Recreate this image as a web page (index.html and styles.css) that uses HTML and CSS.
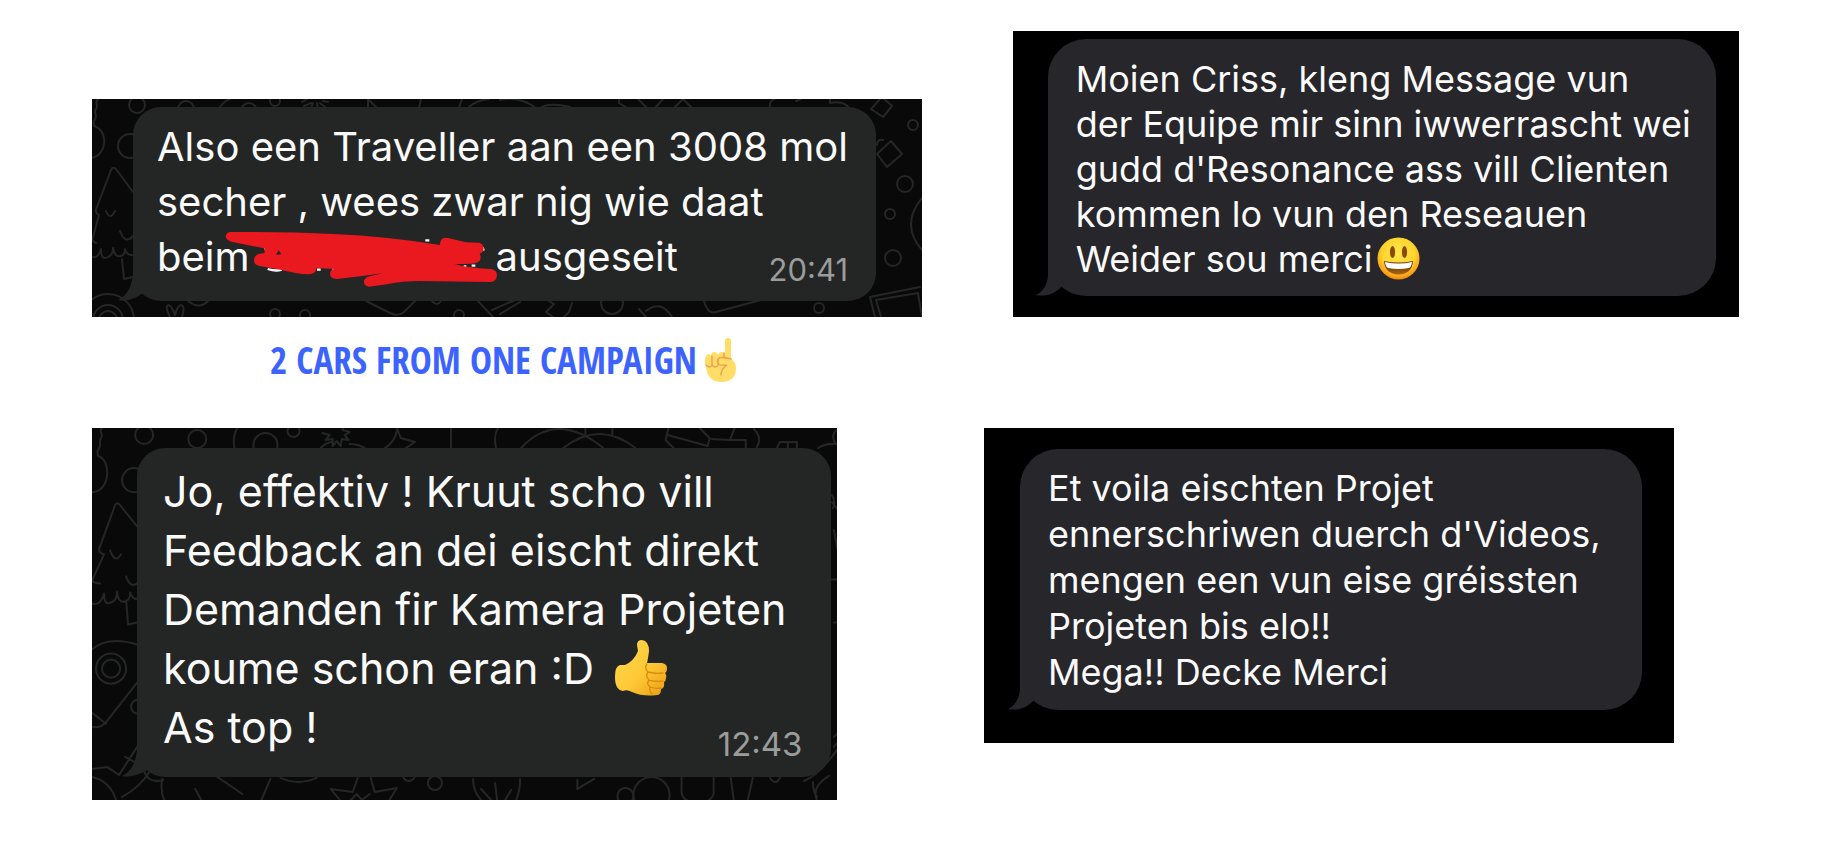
FILE: index.html
```
<!DOCTYPE html>
<html lang="lb">
<head>
<meta charset="utf-8">
<meta name="viewport" content="width=device-width, initial-scale=1">
<title>Client feedback</title>
<link rel="stylesheet" href="styles.css">
</head>
<body>
<main class="board">
  <article class="shot shot-traveller">
    <svg class="doodles" viewBox="0 0 830 218" preserveAspectRatio="xMinYMin slice" aria-hidden="true">
      <circle cx="45" cy="6" r="8"/><circle cx="38" cy="47" r="12"/><circle cx="94" cy="10" r="8"/><circle cx="157" cy="12" r="8"/><circle cx="183" cy="2" r="5"/>
      <path d="M6 0c-4 4 1 6-2 10s2 6-1 10 0 4-1 7c14 4 14 28-2 32"/>
      <path d="M128 8q4-6 10-8M210 3l5-3m-3 7l7-3m0 5l2-5m5 6l-1-6m8 4l-5-4m8-1l-5-1M276 9V0l9 9M327 9l2-9M367 9l3-9M377 8q8-7 20-8"/>
      <path d="M41 93L24 70q-3-3-5 1L5 108q-3 5 2 8L1 138q-2 4 3 6M0 158q6 2 9-8 0 12 7 8 5-2 5-9 2 10 8 8 4-1 4-7 2 7 8 6M14 112q4 10 9 0M28 132q5 14 13 5M30 160l2 20 9-2"/>
      <circle cx="16" cy="221" r="26"/><circle cx="16" cy="221" r="15"/><circle cx="16" cy="221" r="9"/>
      <path d="M78 218c-8-15 1-16 5-2 3-14 12-13 7 2M96 202q11 9 20 0M274 202l24 12q8 4 14-1l12-12M340 202q5 6 9 0M386 202l15 16M400 211l23-10"/>
      <circle cx="183" cy="215" r="5"/><circle cx="213" cy="216" r="5"/><circle cx="367" cy="216" r="5"/>
      <path d="M408 1q20-4 36 8M448 9q9-6 30-1M527 0l0 4 10 6M546 0l9 9M571 0l-8 9M582 9l9-9 9 9M678 9q-1-8 5-9M704 2l5-2M738 0v4q14-3 20 6"/>
      <path d="M408 215l20-12M455 201l7 4-8 8 7 5M472 218l5-5 3-9M612 202q4 14 12 11l45-12M547 210l7 8m0-6q15-12 26 6"/><circle cx="520" cy="204" r="11"/>
      <path d="M790-2l10 9-9 11-12-8zM785 46q0-6 6-5M785 55l14-13 11 13-15 13zM778 198l50-10M778 198l5 20M784 201l42-7 4 24M784 201l5 17"/>
      <circle cx="821" cy="26" r="5"/><circle cx="813" cy="85" r="8"/><circle cx="798" cy="115" r="5"/><circle cx="801" cy="159" r="8"/><circle cx="727" cy="209" r="5"/>
      <path d="M830 99q-22 27 0 52"/>
    </svg>
    <div class="bubble">
      <svg class="tail" viewBox="0 0 30 30" aria-hidden="true"><path d="M15 0C15 14 9 25 0 29C9 31 18 27 25 22L30 0Z"/></svg>
      <p class="message">Also een Traveller aan een 3008 mol<br>secher , wees zwar nig wie daat<br>beim<span class="redaction"><svg class="scribble" viewBox="0 0 870 210" aria-hidden="true">
        <path class="ink" d="M134 74q2-3 4-3M143 132q25 8 42 2M291 134h11M337 131h8M616 46h12M731 124h8M755 122h11M788 67l3 10"/>
        <path d="M30 21Q200 20 340 27Q500 34 660 60Q660 34 684 39L738 52L778 53Q792 58 791 72Q789 84 779 86Q785 97 779 107Q772 115 751 116L704 118Q758 131 814 132Q831 136 831 151Q830 170 811 171L600 168Q545 168 505 177L447 185Q430 182 432 167Q436 157 449 154L488 145L421 154L350 162Q329 161 330 146Q331 134 343 132L290 129Q287 146 268 148Q230 146 181 134L119 123Q101 120 102 103Q105 89 119 86L134 84L133 70L34 50Q17 44 17 34Q18 23 30 21ZM176 76L168 89L184 88Z"/>
      </svg></span>ausgeseit</p>
      <time class="stamp">20:41</time>
    </div>
  </article>

  <article class="shot shot-team dark">
    <div class="bubble">
      <svg class="tail" viewBox="0 0 30 40" aria-hidden="true"><path d="M12 0V18C12 28 7 36 0 39C10 41 19 38 26 30L30 0Z"/></svg>
      <p class="message">Moien Criss, kleng Message vun<br>der Equipe mir sinn iwwerrascht wei<br>gudd d'Resonance ass vill Clienten<br>kommen lo vun den Reseauen<br>Weider sou merci<svg class="smiley" viewBox="0 0 43 43" role="img" aria-label="Smiling face">
        <defs>
          <radialGradient id="face" cx=".5" cy=".38" r=".64"><stop offset="0" stop-color="#ffe64b"/><stop offset=".6" stop-color="#ffd52e"/><stop offset=".85" stop-color="#fba51b"/><stop offset="1" stop-color="#e87c08"/></radialGradient>
          <linearGradient id="mouth" x1="0" y1="0" x2="0" y2="1"><stop offset=".3" stop-color="#6b3906"/><stop offset="1" stop-color="#a8660f"/></linearGradient>
        </defs>
        <circle cx="21.500" cy="21.500" r="21" fill="url(#face)"/>
        <ellipse cx="15.500" cy="15" rx="2.600" ry="6" fill="#8a4b08"/><ellipse cx="27.500" cy="15" rx="2.600" ry="6" fill="#8a4b08"/>
        <path d="M7 24q14.500 3 29 0-1 13-14.500 13.500Q8 37 7 24z" fill="url(#mouth)"/>
        <path d="M8 25q13.500 3 27 0-.5 5-3 6-10.500 2-21 0-2.500-1-3-6z" fill="#fff"/>
      </svg></p>
    </div>
  </article>

  <h2 class="caption">2 CARS FROM ONE CAMPAIGN
    <svg class="finger" viewBox="0 0 31 45" role="img" aria-label="Index finger pointing up">
      <path fill="#ffdd67" d="M20 3q0-3 3-3t3 3v18q5 3 5 9 0 14-15 14Q3 44 1 29q-2-6 0-11 3-4 5 0 0-4 3-4 3 0 4 3 1-3 4-3 2 0 3 2z"/>
      <path fill="none" stroke="#eba352" stroke-width="1.500" stroke-linecap="round" d="M1 27q4 4 6 0v-9m0 9q4 4 6 0v-6m13 0q-12-3-13 0c-2 5 1 7 9 6q-6 4-6 10M19 15v5"/>
    </svg>
  </h2>

  <article class="shot shot-camera">
    <svg class="doodles" viewBox="0 0 745 371" preserveAspectRatio="xMinYMin slice" aria-hidden="true">
      <circle cx="52" cy="7" r="9"/><circle cx="105" cy="11" r="9"/><circle cx="173" cy="17" r="12"/><circle cx="201" cy="3" r="6"/><circle cx="42" cy="52" r="12"/>
      <path d="M10 0c-4 4 2 6-1 10s1 6-2 10-1 4-1 8c14 4 12 36-6 36M142 20q-2-12 3-20M230 5l7 2-4 5 7-1v7l4-5 4 5 1-7 7 1-4-5 5-3-7-2 1-5M228 20q6-6 12-6M257 16q10 0 18 6M304 0l4 10 14 4-12 8M304 3q-2 11-12 17M358 20V0"/>
      <path d="M45 98L28 77q-3-4-5 0L8 118q-3 6 4 8L1 150q-2 5 7 5M0 175q8 3 12-10 0 13 7 9 6-2 6-11 1 12 8 10 5-1 5-9 3 8 7 6M18 122q5 14 11 4M34 148q4 12 11 7M34 172l2 24 9-2"/>
      <path d="M0 221q16-14 45-5M45 254L15 292q-6 8-15 6M0 284l14 11"/><circle cx="19" cy="240" r="15"/><circle cx="19" cy="240" r="9"/><circle cx="46" cy="278" r="7"/>
      <path d="M0 340l15-2 12 8 18-28M33 328l11 6M0 348q18 4 24 23M30 368q18-10 28-26M52 342q4 13 19 9M70 350q-2 12 2 21M103 360l6 11M125 348l25 17M178 350l-9 21M188 349q18 8 36 0M265 349l-5 14-22-3 10 12M278 349l4 14 22-4-8 13M258 371l6-6 5 6 8-6"/>
      <circle cx="342" cy="354" r="7"/><circle cx="316" cy="346" r="6"/>
      <path d="M403 20q-3-12 2-20M428 20q35-38 82 0M470 20q36-28 72 0M492 0v6M519 0v7M575 0l-3 12 8 8M574 7l40 11 2-8-10-10M618 11l18 1 5-12M636 12l16 0v8M660 1q9 9 3 18M683 20l3-6h17v6M694 14v6M724 20q8-5 18-4-7-9 3-16M738 67q4 6 1 13M738 74l7 9M740 102l5 27M738 151h7M740 194h7"/>
      <path d="M380 350q0 12 8 21M427 350q0 11-4 21M388 360l10 11M418 361l-6 10M404 371l-2-17M484 351v9l17-10M588 349v15q2 10 16 9 13 1 16-8v-16M637 349l3 22M659 349l-5 22M676 349q6 8 10 0M710 352q16-6 35-34M735 347q-18 11-12 24M719 353q0 10 4 15M740 308l5-5M740 318l5-6"/>
      <circle cx="558" cy="366" r="18"/><circle cx="532" cy="367" r="8"/>
    </svg>
    <div class="bubble">
      <svg class="tail" viewBox="0 0 30 30" aria-hidden="true"><path d="M15 0C15 14 9 25 0 29C9 31 18 27 27 22L30 0Z"/></svg>
      <p class="message">Jo, effektiv ! Kruut scho vill<br>Feedback an dei eischt direkt<br>Demanden fir Kamera Projeten<br>koume schon eran :D <svg class="thumb" viewBox="0 0 53 57" role="img" aria-label="Thumbs up">
        <defs><linearGradient id="skin" x1="0" y1="0" x2="1" y2="1"><stop offset="0" stop-color="#ffd84f"/><stop offset=".55" stop-color="#ffc936"/><stop offset="1" stop-color="#e99b13"/></linearGradient></defs>
        <path fill="url(#skin)" d="M23 6q0-5 5-5 7 1 7 11-1 8-2 12l15 0q5 1 5 5 0 4-2 5 2 2 1 5 0 3-2 4 1 6-3 7 0 6-4 6-14 2-25-3-5-3-9-1Q1 51 1 38q0-11 5-12h5q9-4 13-14z"/>
        <path fill="none" stroke="#d98a13" stroke-width="1.300" stroke-linecap="round" d="M33 25q-3 4 1 8 8 2 15 1M34 33q-3 4 1 8 7 2 14 1M35 41q-3 4 1 7 6 2 11 1M36 48q-1 4 2 7"/>
      </svg><br>As top !</p>
      <time class="stamp">12:43</time>
    </div>
  </article>

  <article class="shot shot-project dark">
    <div class="bubble">
      <svg class="tail" viewBox="0 0 30 40" aria-hidden="true"><path d="M12 0V18C12 28 7 36 0 39C10 41 19 38 26 30L30 0Z"/></svg>
      <p class="message">Et voila eischten Projet<br>ennerschriwen duerch d'Videos,<br>mengen een vun eise gréissten<br>Projeten bis elo!!<br>Mega!! Decke Merci</p>
    </div>
  </article>
</main>
</body>
</html>
```
FILE: styles.css
```
* {
  box-sizing: border-box;
}

body {
  margin: 0;
  background: #fff;
  font-family: Inter, "Liberation Sans", sans-serif;
}

.board {
  display: grid;
  grid-template-columns: 830fr 755fr;
  column-gap: 62px;
  padding: 31px 92px 40px;
}

.shot {
  position: relative;
  overflow: hidden;
  background: #090909;
}

.shot-traveller {
  align-self: end;
  padding: 8px 46px 16px 41px;
}

.shot-team {
  width: 96.2%;
  justify-self: end;
  padding: 8px 23px 21px 35px;
}

.shot-camera {
  grid-column: 1;
  width: 89.7%;
  padding: 20px 6px 23px 45px;
}

.shot-project {
  width: 91.4%;
  align-self: start;
  padding: 21px 32px 33px 36px;
}

.dark {
  background: #000;
}

.doodles {
  position: absolute;
  inset: 0;
  width: 100%;
  height: 100%;
  fill: none;
  stroke: #252626;
  stroke-width: 2;
  stroke-linecap: round;
  stroke-linejoin: round;
}

.bubble {
  position: relative;
  display: grid;
  border-radius: 28px;
  background: #242625;
  color: #fafafa;
}

.shot-traveller .bubble {
  padding: 12px 28px 17px 24px;
  font-size: 40px;
  line-height: 55px;
}

.shot-camera .bubble {
  padding: 14px 28px 16px 26px;
  font-size: 43px;
  line-height: 59px;
}

.dark .bubble {
  padding: 18px 28px 14px;
  border-radius: 38px;
  background: #27262b;
  font-size: 36px;
  line-height: 45px;
}

.shot-project .bubble {
  padding: 16px 28px 15px;
  line-height: 46px;
}

.tail {
  position: absolute;
  bottom: 0;
  left: -15px;
  width: 30px;
  height: 30px;
  fill: #242625;
}

.dark .tail {
  left: -12px;
  height: 40px;
  fill: #27262b;
}

.message {
  grid-area: 1 / 1;
  margin: 0;
  white-space: nowrap;
}

.shot-camera .message {
  padding-bottom: 4px;
}

.stamp {
  grid-area: 1 / 1;
  place-self: end;
  color: #9b9c9c;
  font-size: 31px;
  line-height: 28px;
}

.shot-camera .stamp {
  font-size: 33px;
  line-height: 33px;
}

.redaction {
  position: relative;
  display: inline-block;
  width: 246px;
  height: 1px;
}

.scribble {
  position: absolute;
  bottom: -24px;
  left: -30px;
  width: 290px;
  height: 70px;
  fill: #e9191f;
  fill-rule: evenodd;
}

.scribble .ink {
  fill: none;
  stroke: #fafafa;
  stroke-width: 7;
  stroke-linecap: butt;
}

.smiley {
  width: 43px;
  height: 43px;
  margin-left: 4px;
  vertical-align: -8px;
}

.thumb {
  width: 53px;
  height: 57px;
  margin-left: 8px;
  vertical-align: -12px;
}

.caption {
  display: flex;
  grid-column: 1;
  align-items: center;
  justify-content: center;
  gap: 8px;
  height: 111px;
  margin: 0;
  padding: 0 8px 25px 0;
  color: #3d63ff;
  font: bold 37px/44px "Open Sans Condensed", "Open Sans", sans-serif;
}

.finger {
  width: 31px;
  height: 45px;
}
```
